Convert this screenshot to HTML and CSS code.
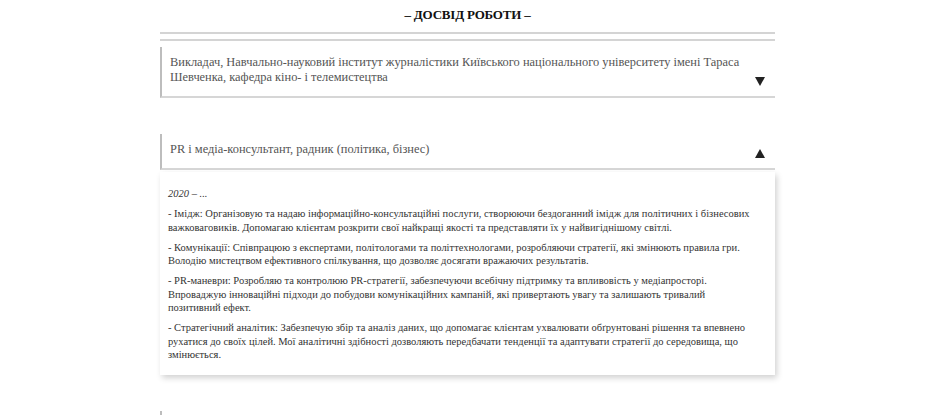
FILE: index.html
```html
<!DOCTYPE html>
<html lang="uk">
<head>
    <meta charset="UTF-8">
    <meta name="viewport" content="width=device-width, initial-scale=1.0">
    <title>Досвід роботи</title>
    <link rel="stylesheet" href="styles.css">
</head>
<body>
    <section class="experience">
        <h2 class="section-title">– ДОСВІД РОБОТИ –</h2>
        <div class="rule"></div>

        <div class="job">
            <div class="job-head">
                <span class="job-title">Викладач, Навчально-науковий інститут журналістики Київського національного університету імені Тараса Шевченка, кафедра кіно- і телемистецтва</span>
                <svg class="arrow" width="10" height="9" viewBox="0 0 10 9"><polygon points="0,0 10,0 5,9" /></svg>
            </div>
        </div>

        <div class="job open">
            <div class="job-head">
                <span class="job-title">PR і медіа-консультант, радник (політика, бізнес)</span>
                <svg class="arrow" width="10" height="9" viewBox="0 0 10 9"><polygon points="0,9 10,9 5,0" /></svg>
            </div>
            <div class="job-body">
                <p class="period">2020 – ...</p>
                <p>- Імідж: Організовую та надаю інформаційно-консультаційні послуги, створюючи бездоганний імідж для політичних і бізнесових важковаговиків. Допомагаю клієнтам розкрити свої найкращі якості та представляти їх у найвигіднішому світлі.</p>
                <p>- Комунікації: Співпрацюю з експертами, політологами та політтехнологами, розробляючи стратегії, які змінюють правила гри. Володію мистецтвом ефективного спілкування, що дозволяє досягати вражаючих результатів.</p>
                <p>- PR-маневри: Розробляю та контролюю PR-стратегії, забезпечуючи всебічну підтримку та впливовість у медіапросторі. Впроваджую інноваційні підходи до побудови комунікаційних кампаній, які привертають увагу та залишають тривалий позитивний ефект.</p>
                <p>- Стратегічний аналітик: Забезпечую збір та аналіз даних, що допомагає клієнтам ухвалювати обґрунтовані рішення та впевнено рухатися до своїх цілей. Мої аналітичні здібності дозволяють передбачати тенденції та адаптувати стратегії до середовища, що змінюється.</p>
            </div>
        </div>

        <div class="job">
            <div class="job-head job-head-empty"></div>
        </div>
    </section>
</body>
</html>
```

FILE: styles.css
```css
*{
    margin: 0;
    padding: 0;
    box-sizing: border-box;
}
body{
    background: #fff;
    font-family: "Liberation Serif", "DejaVu Serif", serif;
    color: #333;
}
.experience{
    width: 615px;
    margin: 0 auto;
    padding-top: 5px;
}
.section-title{
    text-align: center;
    font-size: 13px;
    line-height: 20px;
    font-weight: bold;
    letter-spacing: -0.2px;
    color: #111;
}
.rule{
    height: 9px;
    margin-top: 7px;
    border-top: 2px solid #d4d4d4;
    border-bottom: 2px solid #d4d4d4;
}
.job{
    margin-top: 6px;
}
.job + .job{
    margin-top: 36px;
}
.job-head{
    display: flex;
    align-items: flex-end;
    justify-content: space-between;
    padding: 8px 10px 11px 8px;
    border-left: 2px solid #bdbdbd;
    border-bottom: 2px solid #d6d6d6;
}
.job-head-empty{
    height: 35px;
}
.job-title{
    max-width: 575px;
    font-size: 12.4px;
    line-height: 15px;
    color: #555;
}
.arrow{
    flex-shrink: 0;
    margin-bottom: -1px;
    fill: #222;
}
.job-body{
    margin-top: 2px;
    padding: 15px 15px 14px 8px;
    background: #fff;
    box-shadow: 2px 3px 6px rgba(0, 0, 0, 0.18);
}
.job-body p{
    font-size: 10.5px;
    line-height: 13.3px;
    color: #333;
    margin-top: 7px;
}
.job-body .period{
    margin-top: 0;
    margin-bottom: 4px;
    font-style: italic;
}
```
